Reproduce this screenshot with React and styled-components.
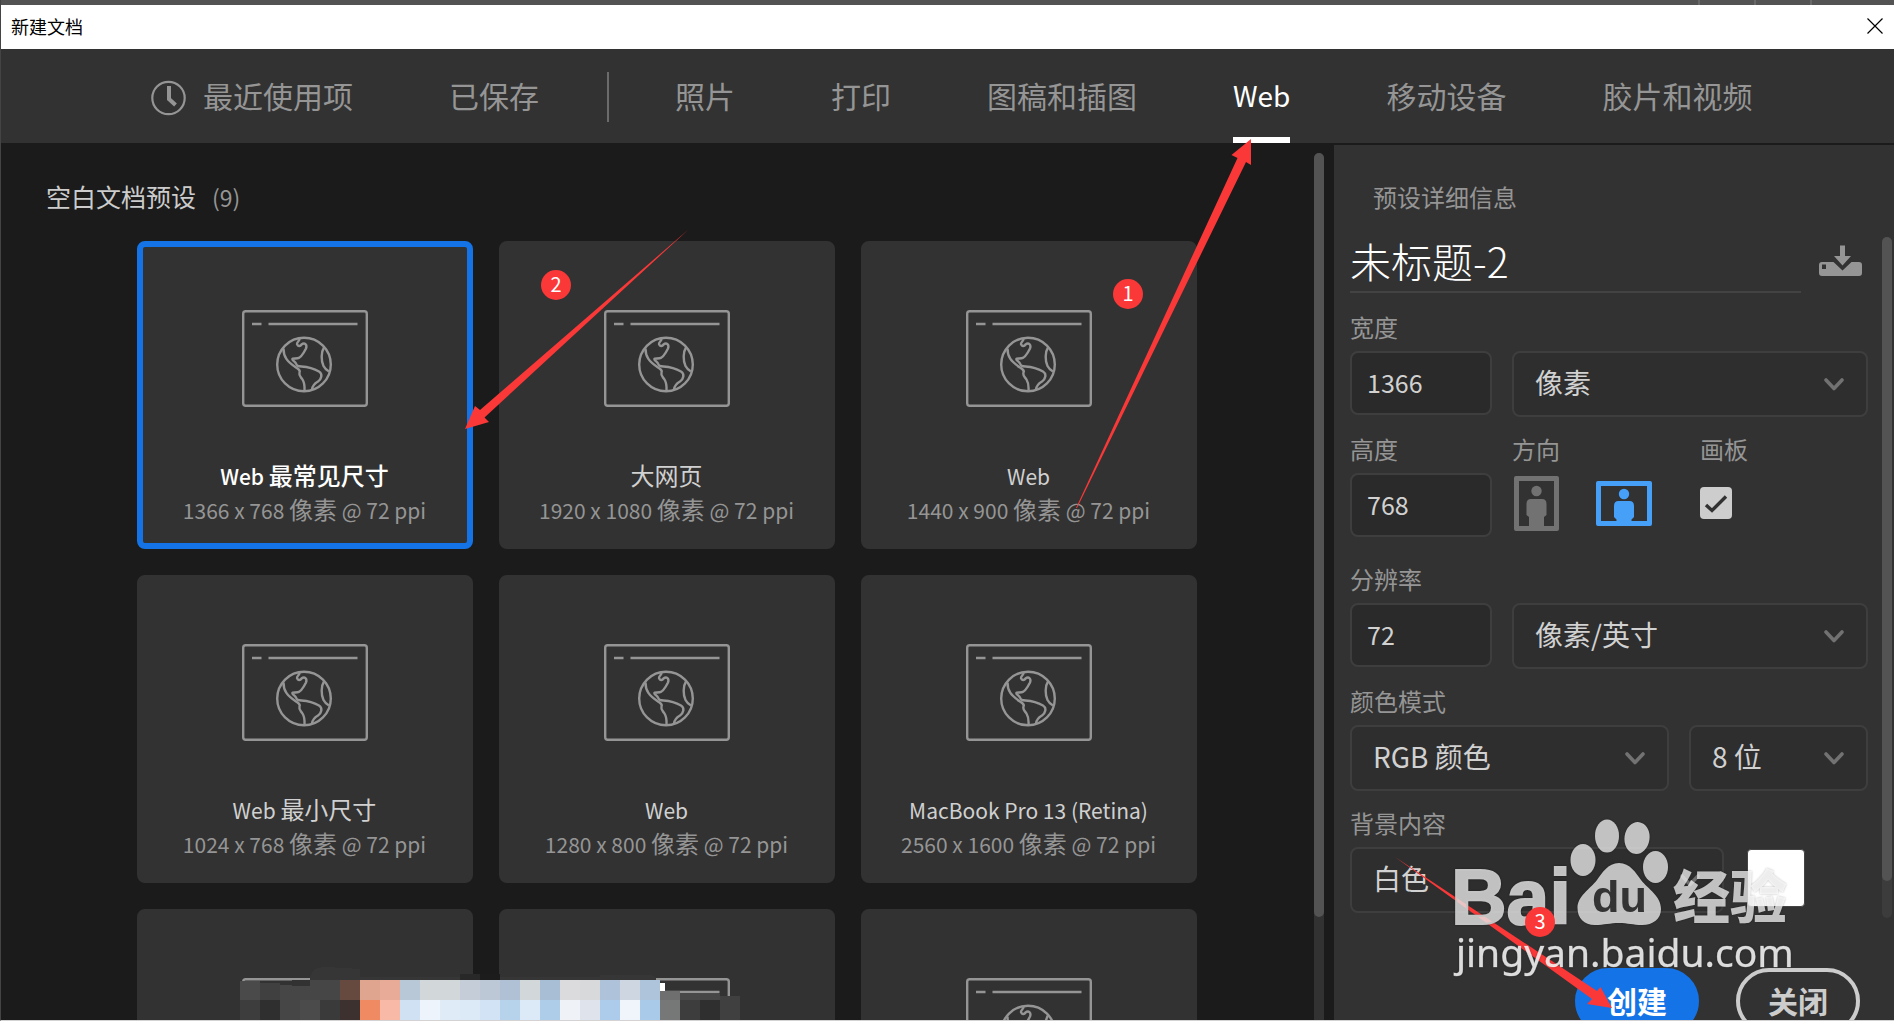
import React from "react";
import styled, { createGlobalStyle, css } from "styled-components";

const sans = '"Noto Sans CJK SC", "Noto Sans", sans-serif';

const GlobalStyle = createGlobalStyle`
  * { box-sizing: border-box; }
  body { margin: 0; background: #1b1b1b; overflow: hidden; font-family: ${sans}; }
  button, input, select { font-family: inherit; margin: 0; }
`;

const Window = styled.div`
  position: relative;
  display: flex;
  flex-direction: column;
  height: 100vh;
  overflow: hidden;
  border-left: 1px solid #444444;
  border-bottom: 1px solid #d4d2d2;
`;

const HostStrip = styled.div`
  flex: none;
  display: flex;
  justify-content: flex-end;
  gap: 54px;
  height: 5px;
  padding-right: 82px;
  background: #535353;
`;

const HostTick = styled.i`
  width: 2px;
  background: #686868;
`;

const TitleBar = styled.header`
  flex: none;
  display: flex;
  align-items: center;
  justify-content: space-between;
  height: 44px;
  padding: 0 10px 2px;
  background: #ffffff;
  color: #000000;
  font-size: 18px;
  line-height: 24px;
`;

const BareButton = styled.button`
  display: flex;
  padding: 0;
  border: 0;
  background: none;
  cursor: pointer;
`;

const Tabs = styled.nav`
  flex: none;
  display: flex;
  align-items: stretch;
  height: 94px;
  padding-left: 102px;
  background: #323232;
`;

const Tab = styled.button`
  display: flex;
  align-items: center;
  gap: 16px;
  padding: 0 48px;
  border: 0;
  background: none;
  color: ${(p) => (p.$active ? "#ffffff" : "#959595")};
  font-size: 30px;
  line-height: 40px;
  white-space: nowrap;
  cursor: pointer;
  > svg { margin-top: 4px; }
`;

const TabText = styled.span`
  display: flex;
  align-items: center;
  align-self: stretch;
  padding-bottom: 2px;
  ${(p) =>
    p.$active &&
    css`
      font-size: 28px;
      border-bottom: 6px solid #ffffff;
      padding: 4px 0 0;
    `}
`;

const TabDivider = styled.i`
  align-self: center;
  width: 2px;
  height: 50px;
  margin: 2px 18px 0 20px;
  background: #6b6b6b;
`;

const Body = styled.div`
  flex: 1;
  display: flex;
  min-height: 0;
`;

const Presets = styled.main`
  flex: 1;
  display: flex;
  min-width: 0;
  padding-right: 10px;
  background: #1b1b1b;
`;

const PresetScroll = styled.div`
  flex: 1;
  min-width: 0;
  overflow: hidden;
  padding: 35px 0 0 18px;
`;

const SectionTitle = styled.h2`
  margin: 0 0 28px 27px;
  color: #cccccc;
  font-size: 25px;
  font-weight: 400;
  line-height: 36px;
`;

const Count = styled.span`
  margin-left: 16px;
  color: #959595;
  font-size: 23px;
`;

const Grid = styled.div`
  display: grid;
  grid-template-columns: repeat(3, 336px);
  justify-content: center;
  gap: 26px;
  margin-top: -2px;
`;

const Card = styled.button`
  display: flex;
  flex-direction: column;
  align-items: center;
  height: 308px;
  padding: 63px 0 0;
  border: 6px solid ${(p) => (p.$selected ? "#1473e6" : "#323232")};
  border-radius: 8px;
  background: #323232;
  cursor: pointer;
`;

const CardName = styled.span`
  margin-top: 52px;
  color: ${(p) => (p.$selected ? "#ffffff" : "#d0d0d0")};
  font-size: 21px;
  font-weight: ${(p) => (p.$selected ? 500 : 400)};
  line-height: 34px;
`;

const CardSize = styled.span`
  color: #959595;
  font-size: 21px;
  line-height: 34px;
`;

const Han = styled.span`
  font-size: 24px;
  line-height: 24px;
`;

const Track = styled.div`
  flex: none;
  width: 10px;
  margin-top: ${(p) => p.$top}px;
  border-radius: 5px 5px ${(p) => (p.$open ? "0 0" : "5px 5px")};
  background: ${(p) => p.$color};
`;

const Thumb = styled.div`
  height: ${(p) => p.$size}px;
  border-radius: 5px;
  background: #535353;
`;

const Details = styled.aside`
  flex: none;
  width: 560px;
  margin-top: 2px;
  padding: 34px 2px 0 16px;
  background: #323232;
`;

const DetailsTitle = styled.h2`
  margin: 0 0 22px 23px;
  color: #959595;
  font-size: 24px;
  font-weight: 400;
  line-height: 36px;
`;

const DetailsScroll = styled.div`
  display: flex;
  justify-content: space-between;
`;

const Form = styled.form`
  display: flex;
  flex-direction: column;
  width: 518px;
`;

const NameRow = styled.div`
  display: flex;
  justify-content: space-between;
  margin-bottom: 20px;
`;

const NameInput = styled.input`
  width: 451px;
  height: 56px;
  padding: 0 0 8px;
  border: 0;
  border-bottom: 2px solid #434343;
  outline: 0;
  background: none;
  color: #ffffff;
  font-size: 41px;
  font-weight: 300;
`;

const Row = styled.div`
  display: flex;
  gap: 20px;
  margin-bottom: ${(p) => (p.$loose ? 26 : 18)}px;
  &:last-child { margin-bottom: 5px; }
`;

const Field = styled.div`
  display: flex;
  flex-direction: column;
  gap: 6px;
  width: ${(p) => (p.$width ? `${p.$width}px` : "auto")};
  flex: ${(p) => (p.$width ? "none" : "1")};
`;

const labelText = css`
  color: #959595;
  font-size: 24px;
  line-height: 28px;
  white-space: nowrap;
  min-height: 32px;
`;

const Label = styled.label`
  ${labelText}
`;

const Caption = styled.span`
  ${labelText}
`;

const NumberBox = styled.input`
  width: 100%;
  height: 64px;
  padding: 0 15px 2px;
  border: 2px solid #3e3e3e;
  border-radius: 8px;
  outline: 0;
  background: #2a2a2a;
  color: #d1d1d1;
  font-size: 25px;
`;

const SelectBox = styled.div`
  display: grid;
  align-items: center;
  > * { grid-area: 1 / 1; }
  > svg { justify-self: end; margin-right: 24px; pointer-events: none; }
`;

const Select = styled.select`
  width: 100%;
  height: 66px;
  padding: 0 21px 5px;
  appearance: none;
  border: 2px solid #3e3e3e;
  border-radius: 8px;
  outline: 0;
  background: #2e2e2e;
  color: #d1d1d1;
  font-size: 28px;
`;

const Orientation = styled.div`
  display: flex;
  align-items: center;
  gap: 37px;
  height: 66px;
  padding: 0 0 5px 2px;
`;

const CheckBox = styled.div`
  display: grid;
  align-content: center;
  width: 32px;
  height: 60px;
  > * { grid-area: 1 / 1; }
  > svg { pointer-events: none; }
`;

const CheckInput = styled.input`
  width: 32px;
  height: 32px;
  appearance: none;
  border-radius: 4px;
  background: #cdcdcd;
`;

const Swatch = styled.button`
  width: 58px;
  height: 58px;
  margin: 40px 0 0 3px;
  padding: 0;
  border: 1px solid #444444;
  border-radius: 4px;
  background: #ffffff;
`;

const Actions = styled.div`
  display: flex;
  justify-content: flex-end;
  gap: 37px;
  padding: 50px 32px 0 0;
`;

const Pill = styled.button`
  width: 124px;
  height: 66px;
  padding: 0 0 2px;
  border: 4px solid ${(p) => (p.$primary ? "#1473e6" : "#cccccc")};
  border-radius: 33px;
  background: ${(p) => (p.$primary ? "#1473e6" : "transparent")};
  color: ${(p) => (p.$primary ? "#ffffff" : "#cccccc")};
  font-size: 30px;
  font-weight: 700;
  line-height: 36px;
`;

const Overlay = styled.svg`
  position: absolute;
  top: 0;
  left: -1px;
  width: 1894px;
  height: 1021px;
  pointer-events: none;
`;

const Badge = styled.span`
  position: absolute;
  top: ${(p) => p.$y}px;
  left: ${(p) => p.$x}px;
  width: 30px;
  height: 30px;
  border-radius: 50%;
  background: #fb3838;
  color: #ffffff;
  font-size: 20px;
  line-height: 27px;
  text-align: center;
`;

const Mixed = ({ text }) =>
  text
    .split(/([\u4e00-\u9fff]+)/)
    .filter(Boolean)
    .map((part, i) =>
      /[\u4e00-\u9fff]/.test(part) ? <Han key={i}>{part}</Han> : part
    );

const WebIcon = () => (
  <svg width="126" height="97" viewBox="0 0 126 97" fill="none" stroke="#959595" strokeWidth="2.4" strokeLinejoin="round">
    <rect x="1.2" y="1.2" width="123.6" height="94.6" rx="2.5" />
    <path d="M10 14H19.5M26.5 14H115.5" />
    <circle cx="62" cy="54.5" r="26.8" />
    <path d="M41.5 38.5C41.5 47 45 51.5 54 57.5C57 59.5 58.5 60.5 57.5 62.5C56.5 66 59 67 60.5 69.5C63 73.5 62.8 76 62.5 81" />
    <path d="M57.5 28.5C58 31 54.5 32 55 34.2C56 37 58.5 36 59.5 34.5C62.5 32 65.5 34.5 64 38.5C62 42.5 58.5 48 55.5 48.3L50.5 48.8C49.5 50 53 51.5 54 53.5C54.8 56 56 56.3 59.5 56.5C66 57 73.5 59.5 77 61.5C81 64 79.500 69 76 71.500C72.500 73.500 70.500 75 70 79.500" />
    <path d="M82 37.500C79 42 79 51 81.500 56C83 59 84.500 60 87 61.500" />
  </svg>
);

const Chevron = () => (
  <svg width="20" height="13" viewBox="0 0 20 13" fill="none" stroke="#727272" strokeWidth="3.6" strokeLinecap="round" strokeLinejoin="round">
    <path d="M2 2L10 10.500L18 2" />
  </svg>
);

const Choice = ({ id, label, value }) => (
  <SelectBox>
    <Select id={id} aria-label={label} defaultValue={value}>
      <option>{value}</option>
    </Select>
    <Chevron />
  </SelectBox>
);

const presets = [
  ["Web 最常见尺寸", "1366 x 768 像素 @ 72 ppi"],
  ["大网页", "1920 x 1080 像素 @ 72 ppi"],
  ["Web", "1440 x 900 像素 @ 72 ppi"],
  ["Web 最小尺寸", "1024 x 768 像素 @ 72 ppi"],
  ["Web", "1280 x 800 像素 @ 72 ppi"],
  ["MacBook Pro 13 (Retina)", "2560 x 1600 像素 @ 72 ppi"],
  ["", ""],
  ["", ""],
  ["", ""],
];

const mosaicTop = "#4a4a4a #404040 #464646 #464646 #464646 #664a40 #e0a58f #e8ab97 #b9c8d7 #d2d7da #d2d7da #c5cdd9 #bcc8d5 #b0c1d6 #d2d7da #a8bed5 #dbdbdd #d8d9db #aec3da #ced7e1 #aec4da #6f6f6f #484848 #464646 #404040".split(" ");
const mosaicBottom = "#3d3d3d #2f2f2f #464646 #4b4b4b #3a3a3a #3c312e #f08a63 #f8baa6 #cfe1f2 #edf4fc #dfebf6 #dce9f7 #d2e3f5 #b7d3ec #dce9f6 #aecde9 #eff3f8 #dfe4ec #adcceb #f0f5fc #a9cae8 #757877 #3d3d3d #2f2f2f #404040".split(" ");
const mosaicStart = { 0: 981, 1: 983, 2: 985, 21: 991, 22: 993, 23: 994, 24: 996 };

const Mosaic = () => (
  <Overlay viewBox="0 0 1894 1021" shapeRendering="crispEdges">
    <path d="M310 981V978Q312 967 326 967L360 969V977H656V981Z" fill="#363636" />
    <rect x="460" y="974" width="20" height="7" fill="#282828" />
    <rect x="480" y="974" width="20" height="7" fill="#1c1c1c" />
    <path d="M600 981V975H648Q656 975 657 981Z" fill="#363636" />
    <rect x="656" y="983" width="9" height="8" fill="#ffffff" />
    {mosaicTop.map((c, i) => (
      <rect key={i} x={240 + i * 20} y={mosaicStart[i] || 980} width="20" height={1000 - (mosaicStart[i] || 980)} fill={c} />
    ))}
    {mosaicBottom.map((c, i) => (
      <rect key={i} x={240 + i * 20} y="1000" width="20" height="20" fill={c} />
    ))}
    <rect x="292" y="980" width="18" height="6" fill="#323232" />
  </Overlay>
);

const Arrows = () => (
  <Overlay viewBox="0 0 1894 1021" fill="#fb3838">
    <path d="M1076 508L1237.500 158L1231.500 155L1251 139V165L1246 162L1077 508Z" />
    <path d="M689 229L480 410L475 406L465 429L489 422L484.500 417.500Z" />
    <path d="M1395 857L1597 991L1600.500 987L1612 1008L1587 1004L1592 999Z" />
  </Overlay>
);

const Watermark = () => (
  <Overlay viewBox="0 0 1894 1021" style={{ filter: "drop-shadow(0 0 1px rgba(0,0,0,0.35))" }}>
    <g fill="#ffffff" fillOpacity="0.72">
      <ellipse cx="1583" cy="860" rx="12.500" ry="16" />
      <ellipse cx="1607" cy="836" rx="12" ry="16.500" />
      <ellipse cx="1637" cy="838" rx="12.500" ry="16" transform="rotate(8 1637 838)" />
      <ellipse cx="1655.500" cy="867" rx="12.500" ry="16" />
      <path d="M1619 863C1630 863 1636 873 1641 880C1648 889 1661 896 1661 909C1661 919 1653 925 1642 925C1633 925 1628 923 1619 923C1610 923 1604 925 1595 925C1584 925 1577.500 918 1577.500 908C1577.500 896 1590 889 1597 880C1602 873 1608 863 1619 863Z" />
      <text x="1451" y="924" fontFamily="Liberation Sans, sans-serif" fontWeight="700" fontSize="77" stroke="#c4c4c4" strokeWidth="2">Bai</text>
      <text x="1673" y="918" fontFamily="Noto Sans CJK SC, sans-serif" fontWeight="900" fontSize="57">经验</text>
      <text x="1456" y="967" fontFamily="Noto Sans, sans-serif" fontSize="39" fillOpacity="0.840" stroke="#ffffff" strokeOpacity="0.400" strokeWidth="0.600">jingyan.baidu.com</text>
    </g>
    <text x="1592" y="912" fontFamily="Liberation Sans, sans-serif" fontWeight="700" fontSize="45" fill="#343434">du</text>
  </Overlay>
);

export default function App() {
  const stop = (e) => e.preventDefault();
  return (
    <Window>
      <GlobalStyle />
      <HostStrip>
        <HostTick />
        <HostTick />
        <HostTick />
      </HostStrip>
      <TitleBar>
        <span>新建文档</span>
        <BareButton aria-label="关闭窗口">
          <svg width="18" height="18" viewBox="0 0 18 18" stroke="#000000" strokeWidth="1.200">
            <path d="M1.500 1.500L16.500 16.500M16.500 1.500L1.500 16.500" />
          </svg>
        </BareButton>
      </TitleBar>
      <Tabs>
        <Tab>
          <svg width="36" height="36" viewBox="0 0 36 36" fill="none" stroke="#959595">
            <circle cx="17.500" cy="18" r="16.200" strokeWidth="2.200" />
            <path d="M18 6V19L24.500 25" strokeWidth="4" />
          </svg>
          <TabText>最近使用项</TabText>
        </Tab>
        <Tab><TabText>已保存</TabText></Tab>
        <TabDivider />
        <Tab><TabText>照片</TabText></Tab>
        <Tab><TabText>打印</TabText></Tab>
        <Tab><TabText>图稿和插图</TabText></Tab>
        <Tab $active><TabText $active>Web</TabText></Tab>
        <Tab><TabText>移动设备</TabText></Tab>
        <Tab><TabText>胶片和视频</TabText></Tab>
      </Tabs>
      <Body>
        <Presets>
          <PresetScroll>
            <SectionTitle>空白文档预设<Count>(9)</Count></SectionTitle>
            <Grid>
              {presets.map(([name, size], i) => (
                <Card key={i} $selected={i === 0} aria-label={name || "预设"}>
                  <WebIcon />
                  <CardName $selected={i === 0}><Mixed text={name} /></CardName>
                  <CardSize><Mixed text={size} /></CardSize>
                </Card>
              ))}
            </Grid>
          </PresetScroll>
          <Track $top={10} $color="#323232" $open><Thumb $size={764} /></Track>
        </Presets>
        <Details>
          <DetailsTitle>预设详细信息</DetailsTitle>
          <DetailsScroll>
            <Form onSubmit={stop}>
              <NameRow>
                <NameInput aria-label="名称" defaultValue="未标题-2" />
                <BareButton type="button" aria-label="保存预设">
                  <svg width="50" height="40" viewBox="0 0 50 40" fill="#959595">
                    <path d="M22 8.500H27V19H33L24.500 28.500L16 19H22Z" />
                    <path fillRule="evenodd" d="M3 25H15.500L24.500 33.500L33.500 25H41Q44 25 44 28V36Q44 39 41 39H4Q1 39 1 36V28Q1 25 4 25ZM4 27.500V32H8V27.500Z" />
                  </svg>
                </BareButton>
              </NameRow>
              <Row>
                <Field $width={142}><Label htmlFor="w">宽度</Label><NumberBox id="w" defaultValue="1366" /></Field>
                <Field><Caption /><Choice label="单位" value="像素" /></Field>
              </Row>
              <Row $loose>
                <Field $width={142}><Label htmlFor="h">高度</Label><NumberBox id="h" defaultValue="768" /></Field>
                <Field $width={168}>
                  <Caption>方向</Caption>
                  <Orientation>
                    <BareButton type="button" aria-label="纵向">
                      <svg width="45" height="55" viewBox="0 0 45 55" fill="#727272">
                        <path fillRule="evenodd" d="M2 0H43Q45 0 45 2V53Q45 55 43 55H2Q0 55 0 53V2Q0 0 2 0ZM5 5V50H40V5Z" />
                        <circle cx="22.500" cy="15" r="5.200" />
                        <path d="M17 23H28Q32.500 23 32.500 28V39L30 41V51H15V41L12.500 39V28Q12.500 23 17 23Z" />
                      </svg>
                    </BareButton>
                    <BareButton type="button" aria-label="横向">
                      <svg width="56" height="45" viewBox="0 0 56 45" fill="#46a0f8">
                        <path fillRule="evenodd" d="M2 0H54Q56 0 56 2V43Q56 45 54 45H2Q0 45 0 43V2Q0 0 2 0ZM5 5V40H51V5Z" />
                        <circle cx="28" cy="13" r="5.200" />
                        <path d="M22.500 20H33.500Q38 20 38 25V36L35.500 38.500V41H20.500V38.500L18 36V25Q18 20 22.500 20Z" />
                      </svg>
                    </BareButton>
                  </Orientation>
                </Field>
                <Field>
                  <Label htmlFor="artboard">画板</Label>
                  <CheckBox>
                    <CheckInput id="artboard" type="checkbox" defaultChecked />
                    <svg width="32" height="32" viewBox="0 0 32 32" fill="none" stroke="#323232" strokeWidth="3.400">
                      <path d="M6 18L12 23.500L26 9.500" />
                    </svg>
                  </CheckBox>
                </Field>
              </Row>
              <Row>
                <Field $width={142}><Label htmlFor="r">分辨率</Label><NumberBox id="r" defaultValue="72" /></Field>
                <Field><Caption /><Choice label="分辨率单位" value="像素/英寸" /></Field>
              </Row>
              <Row>
                <Field $width={319}><Label htmlFor="mode">颜色模式</Label><Choice id="mode" value="RGB 颜色" /></Field>
                <Field><Caption /><Choice label="位深度" value="8 位" /></Field>
              </Row>
              <Row>
                <Field $width={374}><Label htmlFor="bg">背景内容</Label><Choice id="bg" value="白色" /></Field>
                <Swatch type="button" aria-label="背景颜色" />
              </Row>
            </Form>
            <Track $top={0} $color="#3c3c3c"><Thumb $size={644} /></Track>
          </DetailsScroll>
          <Actions>
            <Pill $primary>创建</Pill>
            <Pill>关闭</Pill>
          </Actions>
        </Details>
      </Body>
      <Mosaic />
      <Arrows />
      <Watermark />
      <Badge $x={1112} $y={279}>1</Badge>
      <Badge $x={540} $y={270}>2</Badge>
      <Badge $x={1524} $y={907}>3</Badge>
    </Window>
  );
}
